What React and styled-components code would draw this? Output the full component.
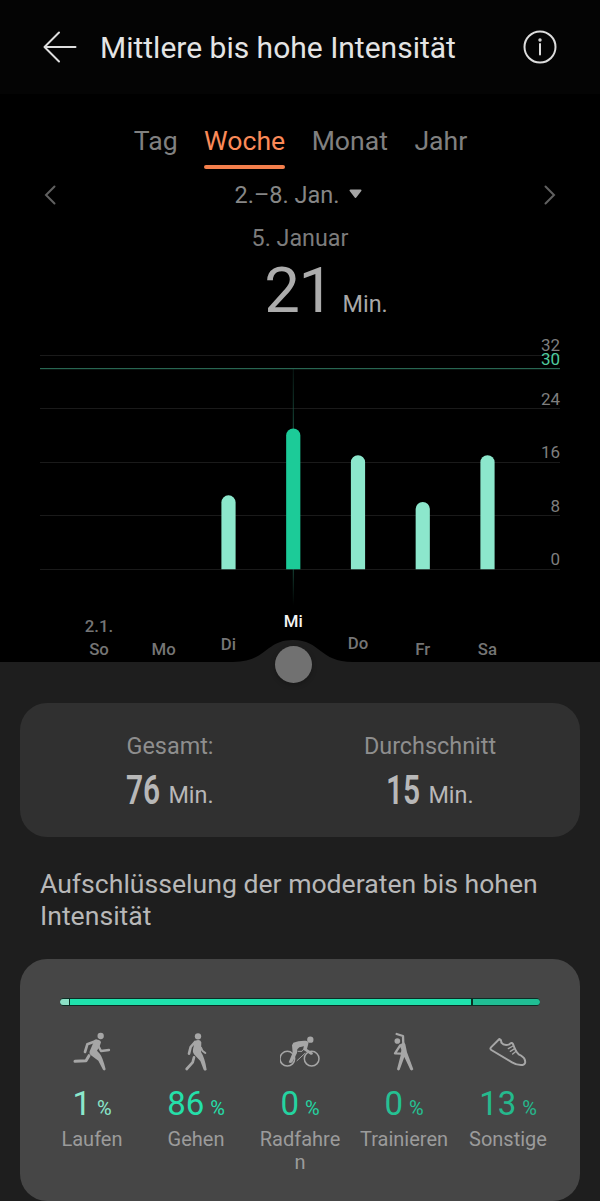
import styled, { createGlobalStyle } from 'styled-components'

const gridLines = [32, 24, 16, 8, 0]
const scaleY = (value) => 246.7 - value * 6.68

const days = [
	{ name: 'So', date: '2.1.', value: 0, lift: 0 },
	{ name: 'Mo', value: 0, lift: 0 },
	{ name: 'Di', value: 11, lift: 5 },
	{ name: 'Mi', value: 21, lift: 28, active: true },
	{ name: 'Do', value: 17, lift: 6 },
	{ name: 'Fr', value: 10, lift: 0 },
	{ name: 'Sa', value: 17, lift: 0 },
]

const activities = [
	{ name: 'Laufen', percent: 1, color: '#8be8cc', icon: <RunIcon /> },
	{ name: 'Gehen', percent: 86, color: '#25dfa9', icon: <WalkIcon /> },
	{ name: 'Radfahren', percent: 0, color: '#24d3a0', icon: <BikeIcon /> },
	{ name: 'Trainieren', percent: 0, color: '#25c193', icon: <StretchIcon /> },
	{ name: 'Sonstige', percent: 13, color: '#25b98d', icon: <ShoeIcon /> },
]

function RunIcon() {
	return (
		<Icon viewBox="0 0 120 120">
			<circle cx="86" cy="12" r="9.500" fill="currentColor" stroke="none" />
			<path d="M72 27L46 37L39 60" strokeWidth="8" />
			<path d="M68 23Q84 21 87 31L83 43L75 56L84 66Q92 76 101 112Q98 118 93 113L79 86L55 68Q50 63 55 53L62 37Z" fill="currentColor" stroke="none" />
			<path d="M80 44L87 57L111 54" strokeWidth="7" />
			<path d="M51 71L42 86L9 88" strokeWidth="9" />
		</Icon>
	)
}

function WalkIcon() {
	return (
		<Icon viewBox="0 0 120 120">
			<circle cx="66" cy="13" r="9.500" fill="currentColor" stroke="none" />
			<path d="M56 27Q72 19 76 31L75 60Q86 76 92 113Q87 118 83 113L73 87L54 67Q49 62 51 52L54 38Z" fill="currentColor" stroke="none" />
			<path d="M57 30L44 45L39 65" strokeWidth="8" />
			<path d="M75 47L79 56L88 63" strokeWidth="6" />
			<path d="M54 76L50 91L32 111" strokeWidth="8" />
		</Icon>
	)
}

function BikeIcon() {
	return (
		<Icon viewBox="0 0 120 120">
			<circle cx="22" cy="80" r="22" strokeWidth="4.500" />
			<circle cx="95" cy="80" r="22" strokeWidth="4.500" />
			<circle cx="91" cy="23" r="9.500" fill="currentColor" stroke="none" />
			<path d="M40 32Q56 25 78 26Q87 29 85 35L81 51L99 63Q99 70 92 68L71 54Q68 50 72 43L58 46L52 52L51 63L37 91Q31 95 26 91L38 62L36 40Z" fill="currentColor" stroke="none" />
			<path d="M51 86L75 64M54 58L66 58L72 50" strokeWidth="3" />
		</Icon>
	)
}

function StretchIcon() {
	return (
		<Icon viewBox="0 0 120 120">
			<circle cx="40" cy="27" r="8.500" fill="currentColor" stroke="none" />
			<path d="M38 6L57 12L58 38" strokeWidth="7" />
			<path d="M46 38L60 31L64 37L69 61L88 112Q84 118 79 113L61 75L47 113Q42 118 39 112L50 70L52 53Z" fill="currentColor" stroke="none" />
			<path d="M48 41L33 64L54 65" strokeWidth="7" />
		</Icon>
	)
}

function ShoeIcon() {
	return (
		<Icon viewBox="0 0 120 120">
			<path d="M34 21L9 46Q5 50 10 54L72 91Q89 101 104 99Q115 96 110 82Q107 74 92 67Q83 59 75 36Q71 30 64 37Q48 42 40 32Q41 24 34 21Z" strokeWidth="6" />
			<path d="M75 42L61 50M80 50L67 58M85 57L74 66" strokeWidth="4" />
		</Icon>
	)
}

function Chart() {
	return (
		<ChartSvg viewBox="0 0 600 290">
			<defs>
				<linearGradient id="marker" x1="0" y1="0" x2="0" y2="1">
					<stop offset="0" stopColor="#1b4e40" stopOpacity="0.3" />
					<stop offset="0.3" stopColor="#1b5c49" />
					<stop offset="0.85" stopColor="#174638" />
					<stop offset="1" stopColor="#174638" stopOpacity="0" />
				</linearGradient>
			</defs>
			{gridLines.map((value) => (
				<g key={value}>
					<rect x="40" y={Math.round(scaleY(value))} width="520" height="1" fill="#1a1a1a" />
					<AxisText x="560" y={scaleY(value) - 3.5}>{value}</AxisText>
				</g>
			))}
			<rect x="40" y="46" width="520" height="1.200" fill="#286652" />
			<AxisText x="560" y="42.500" $goal>30</AxisText>
			<rect x="292.800" y="47" width="1" height="236" fill="url(#marker)" />
			{days.map((day, i) => {
				if (!day.value) return null
				const x = 91.9 + i * 64.75
				const y = scaleY(day.value)
				return (
					<path
						key={day.name}
						d={`M${x} 247.200V${y + 7.2}a7.100 7.100 0 0 1 14.200 0V247.200Z`}
						fill={day.active ? '#1ccb98' : '#8ce7cc'}
					/>
				)
			})}
		</ChartSvg>
	)
}

export default function App() {
	return (
		<Page>
			<GlobalStyle />
			<Header>
				<BackIcon viewBox="0 0 34 32">
					<path d="M16 1.500L1.500 16L16 30.500M1.500 16H32.500" />
				</BackIcon>
				<Heading>Mittlere bis hohe Intensität</Heading>
				<InfoIcon viewBox="0 0 34 34">
					<circle cx="17" cy="17" r="15.500" />
					<path d="M17 14V24.500" />
					<circle cx="17" cy="10" r="0.700" />
				</InfoIcon>
			</Header>
			<Tabs>
				<Tab>Tag</Tab>
				<Tab $active>Woche</Tab>
				<Tab>Monat</Tab>
				<Tab>Jahr</Tab>
			</Tabs>
			<DateRow>
				<Chevron viewBox="0 0 12 20"><path d="M10.500 1.500L2 10L10.500 18.500" /></Chevron>
				<Range>
					2.–8. Jan.
					<Caret viewBox="0 0 13 10"><path d="M1.500 1.500H11.500L6.500 8Z" /></Caret>
				</Range>
				<Chevron viewBox="0 0 12 20"><path d="M1.500 1.500L10 10L1.500 18.500" /></Chevron>
			</DateRow>
			<SelectedDay>5. Januar</SelectedDay>
			<Total>
				<TotalNumber>21</TotalNumber>
				<TotalUnit>Min.</TotalUnit>
			</Total>
			<Chart />
			<Days>
				<Wave viewBox="0 0 120 23">
					<path d="M0 23C34 23 32 1 60 1S86 23 120 23Z" />
				</Wave>
				{days.map((day) => (
					<Day key={day.name} $lift={day.lift} $active={day.active}>
						{day.date && <span>{day.date}</span>}
						<span>{day.name}</span>
					</Day>
				))}
				<Knob />
			</Days>
			<Details>
				<Summary>
					<Stat>
						<StatLabel>Gesamt:</StatLabel>
						<StatValue><StatNumber>76</StatNumber>Min.</StatValue>
					</Stat>
					<Stat>
						<StatLabel>Durchschnitt</StatLabel>
						<StatValue><StatNumber>15</StatNumber>Min.</StatValue>
					</Stat>
				</Summary>
				<SectionTitle>Aufschlüsselung der moderaten bis hohen Intensität</SectionTitle>
				<Breakdown>
					<Progress>
						<Segment $width={8.5} $color="#8be0c5" />
						<Segment $width={401} $color="#1fe3ad" />
						<Segment $width={67.5} $color="#20be94" />
					</Progress>
					<Activities>
						{activities.map((activity) => (
							<Activity key={activity.name}>
								{activity.icon}
								<Percent $color={activity.color}>
									{activity.percent}<small>%</small>
								</Percent>
								<ActivityName>{activity.name}</ActivityName>
							</Activity>
						))}
					</Activities>
				</Breakdown>
			</Details>
		</Page>
	)
}

const GlobalStyle = createGlobalStyle`
	* {
		box-sizing: border-box;
	}
	body {
		margin: 0;
		background-color: #000;
		font-family: Roboto, sans-serif;
	}
`
const Page = styled.div`
	width: 600px;
	height: 1201px;
	overflow: hidden;
	background-color: #000;
`
const Header = styled.header`
	display: flex;
	align-items: center;
	height: 94px;
	padding: 0 43px;
	background-color: #040404;
`
const BackIcon = styled.svg`
	width: 34px;
	height: 32px;
	fill: none;
	stroke: #dedede;
	stroke-width: 2;
	stroke-linecap: round;
	stroke-linejoin: round;
`
const Heading = styled.h1`
	flex: 1;
	margin: 2px 0 0 23px;
	font-size: 30px;
	font-weight: 400;
	line-height: 34px;
	white-space: nowrap;
	color: #e4e4e4;
`
const InfoIcon = styled.svg`
	width: 34px;
	height: 34px;
	fill: none;
	stroke: #dcdcdc;
	stroke-width: 2;
	stroke-linecap: round;
`
const Tabs = styled.nav`
	display: flex;
	justify-content: center;
	gap: 26.500px;
	padding-top: 31px;
	padding-left: 1px;
`
const Tab = styled.div`
	position: relative;
	padding-bottom: 12px;
	font-size: 26.600px;
	line-height: 32px;
	color: ${(props) => (props.$active ? '#fb8a58' : '#808080')};
	&::after {
		content: '';
		display: ${(props) => (props.$active ? 'block' : 'none')};
		position: absolute;
		left: 0;
		right: 0;
		bottom: 0;
		height: 4px;
		border-radius: 2px;
		background-color: #f47f4c;
	}
`
const DateRow = styled.div`
	display: flex;
	align-items: center;
	justify-content: space-between;
	height: 28px;
	margin-top: 12px;
	padding: 0 44px;
`
const Chevron = styled.svg`
	width: 12px;
	height: 20px;
	fill: none;
	stroke: #606060;
	stroke-width: 2;
	stroke-linecap: round;
`
const Range = styled.div`
	display: flex;
	align-items: center;
	gap: 10px;
	padding-right: 3px;
	font-size: 23.500px;
	line-height: 28px;
	color: #868686;
`
const Caret = styled.svg`
	width: 13px;
	height: 10px;
	margin-top: -3px;
	fill: #a5a5a5;
	stroke: #a5a5a5;
	stroke-width: 2;
	stroke-linejoin: round;
`
const SelectedDay = styled.div`
	margin-top: 15px;
	font-size: 23.300px;
	line-height: 28px;
	text-align: center;
	color: #7c7c7c;
`
const Total = styled.div`
	display: flex;
	align-items: baseline;
	justify-content: center;
	gap: 10px;
	height: 64px;
	margin-top: 6px;
	padding-left: 52px;
`
const TotalNumber = styled.span`
	font-size: 63.500px;
	line-height: 65px;
	letter-spacing: -1.500px;
	color: #acacac;
`
const TotalUnit = styled.span`
	font-size: 23.400px;
	line-height: 28px;
	color: #a8a8a8;
`
const ChartSvg = styled.svg`
	display: block;
	width: 600px;
	height: 290px;
`
const AxisText = styled.text`
	font-size: 17px;
	text-anchor: end;
	fill: ${(props) => (props.$goal ? '#50cc9f' : '#7e7e7e')};
`
const Days = styled.div`
	position: relative;
	display: flex;
	align-items: flex-end;
	height: 50px;
	padding: 0 80px 0 66.600px;
`
const Wave = styled.svg`
	position: absolute;
	left: 233px;
	bottom: 0;
	width: 120px;
	height: 23px;
	fill: #1e1e1e;
`
const Knob = styled.div`
	position: absolute;
	left: 275px;
	top: 34px;
	width: 37px;
	height: 37px;
	border-radius: 50%;
	background-color: #717171;
	box-shadow: 0 2px 5px rgba(0, 0, 0, .25);
`
const Day = styled.div`
	position: relative;
	display: flex;
	flex-direction: column;
	align-items: center;
	width: 64.750px;
	padding-bottom: ${(props) => props.$lift + 1}px;
	font-size: 16.800px;
	font-weight: 500;
	line-height: 23px;
	color: ${(props) => (props.$active ? '#f4f4f4' : '#757575')};
`
const Details = styled.main`
	height: 539px;
	padding: 41px 20px 0;
	background-color: #1e1e1e;
`
const Summary = styled.section`
	display: flex;
	height: 134px;
	padding: 29px 20px 0;
	border-radius: 27px;
	background-color: #303030;
`
const Stat = styled.div`
	flex: 1;
	display: flex;
	flex-direction: column;
	align-items: center;
`
const StatLabel = styled.div`
	font-size: 23.400px;
	line-height: 28px;
	color: #8e8e8e;
`
const StatValue = styled.div`
	display: flex;
	align-items: baseline;
	margin-top: 7px;
	font-size: 23.400px;
	line-height: 44px;
	color: #b8b8b8;
`
const StatNumber = styled.span`
	width: 42px;
	font-size: 41px;
	font-weight: 600;
	white-space: nowrap;
	transform: translate(0, 1px) scaleX(.73);
	transform-origin: left;
`
const SectionTitle = styled.h2`
	width: 520px;
	margin: 31px 20px 0;
	font-size: 26.600px;
	font-weight: 400;
	line-height: 31.500px;
	color: #b8b8b8;
`
const Breakdown = styled.section`
	height: 242px;
	margin-top: 28px;
	padding: 39px 20px 0;
	border-radius: 27px;
	background-color: #464646;
`
const Progress = styled.div`
	display: flex;
	gap: 1.500px;
	height: 8px;
	margin: 0 20px;
	border-radius: 4px;
	overflow: hidden;
	background-color: #0c2e25;
`
const Segment = styled.div`
	flex: ${(props) => props.$width};
	margin: 1px 0;
	background-color: ${(props) => props.$color};
	&:first-child {
		border-radius: 4px 0 0 4px;
	}
	&:last-child {
		border-radius: 0 4px 4px 0;
	}
`
const Activities = styled.div`
	display: grid;
	grid-template-columns: repeat(5, 1fr);
	margin-top: 26px;
`
const Activity = styled.div`
	display: flex;
	flex-direction: column;
	align-items: center;
`
const Icon = styled.svg`
	width: 40px;
	height: 40px;
	color: #a6a6a6;
	fill: none;
	stroke: currentColor;
	stroke-linecap: round;
	stroke-linejoin: round;
`
const Percent = styled.div`
	margin-top: 12px;
	font-size: 33px;
	line-height: 40px;
	color: ${(props) => props.$color};
	small {
		margin-left: 6px;
		font-size: 20px;
	}
`
const ActivityName = styled.div`
	width: 90px;
	font-size: 20px;
	line-height: 23px;
	text-align: center;
	word-break: break-all;
	color: #9b9b9b;
`
